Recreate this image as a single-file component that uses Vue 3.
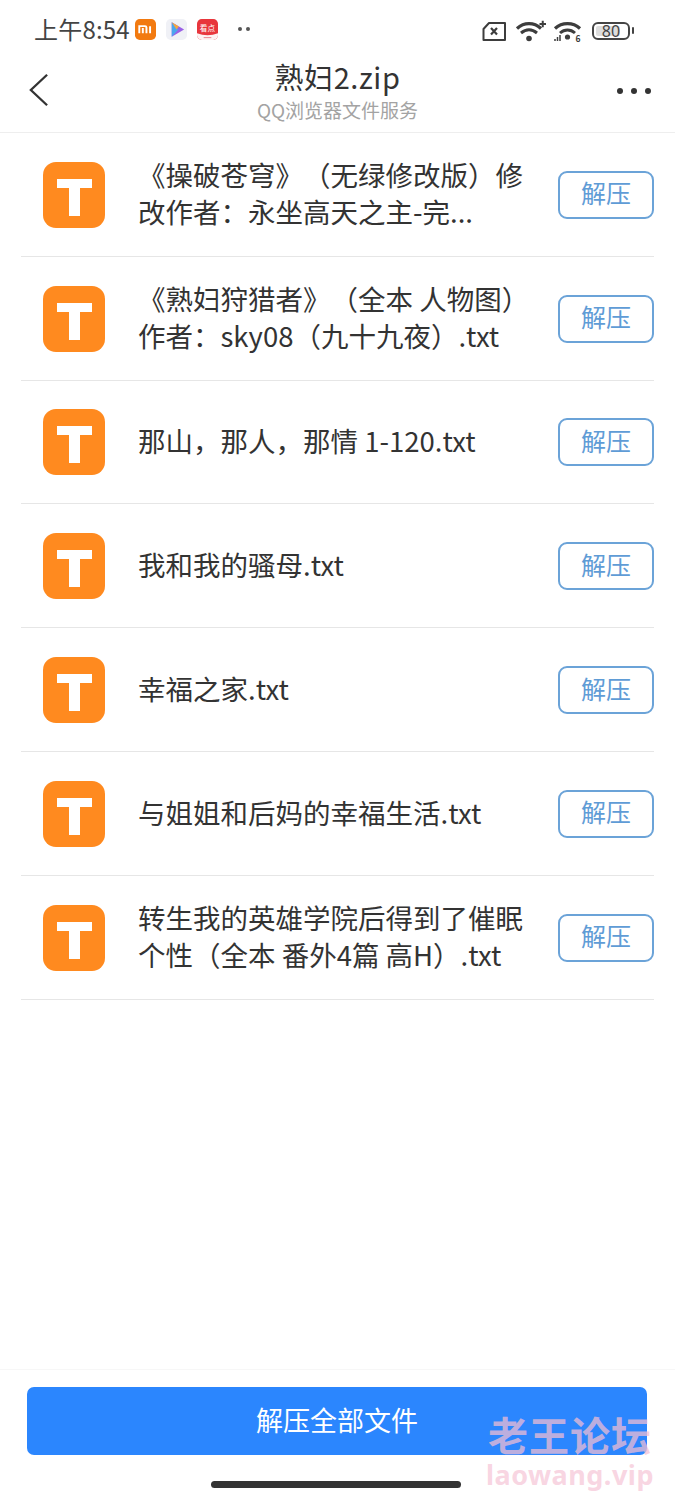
<template>
  <div class="page">
    <div class="status-bar">
      <span class="clock">上午8:54</span>
      <svg class="app-icon" viewBox="0 0 22 22">
        <rect width="22" height="22" rx="5" fill="#f27a10" />
        <path d="M4.500 15V7.500H10.500a1.500 1.500 0 0 1 1.500 1.500V15M8.200 9.500V15M15.800 7.500V15" fill="none" stroke="#fff" stroke-width="2" />
      </svg>
      <svg class="app-icon play" viewBox="0 0 22 22">
        <rect width="22" height="22" rx="5" fill="#f0f1f6" />
        <path d="M6 3.500L19 11L6 18.500Z" fill="#9a5fe6" />
        <path d="M6 3.500L13 11L6 18.500Z" fill="#4aa6ee" />
        <path d="M6 3.500L13.500 7.800L11 11Z" fill="#f4a640" />
      </svg>
      <svg class="app-icon kandian" viewBox="0 0 22 22">
        <rect width="22" height="22" rx="5" fill="#e8363c" />
        <path d="M0 15 Q11 19 22 15 V17 A5 5 0 0 1 17 22 H5 A5 5 0 0 1 0 17Z" fill="#fdf2f2" />
        <path d="M7 19.500h8" stroke="#e8808a" stroke-width="1" />
        <text x="11" y="12.500" text-anchor="middle" font-size="8" fill="#fff">看点</text>
      </svg>
      <span class="dots-small"><i></i><i></i></span>
      <span class="status-right">
        <svg class="sim" viewBox="0 0 24 20">
          <path d="M7 2H23V19H1.500V8Z" fill="none" stroke="#3d3d3d" stroke-width="2" stroke-linejoin="round" />
          <path d="M9 7l6 6.500M15 7l-6 6.500" stroke="#3d3d3d" stroke-width="2.200" />
        </svg>
        <svg class="wifi" viewBox="0 0 30 22">
          <path d="M1 8.500C8 2 18 2 25 8.500" fill="none" stroke="#3d3d3d" stroke-width="3.200" />
          <path d="M5 13C10 8.800 16 8.800 21 13" fill="none" stroke="#3d3d3d" stroke-width="3" />
          <circle cx="13" cy="18.500" r="2.800" fill="#3d3d3d" />
          <path d="M23.500 4h6.500M26.750 0.800v6.500" stroke="#3d3d3d" stroke-width="2" />
        </svg>
        <svg class="wifi second" viewBox="0 0 29 22">
          <path d="M2 8.500C9 2 20 2 27 8.500" fill="none" stroke="#3d3d3d" stroke-width="3.200" />
          <path d="M7 13C11.500 9 17.500 9 22 13" fill="none" stroke="#3d3d3d" stroke-width="3" />
          <circle cx="14.500" cy="17" r="2.600" fill="#3d3d3d" />
          <path d="M2 21v-2M4.500 21v-4M7 21v-6" stroke="#3d3d3d" stroke-width="1.500" />
          <text x="25" y="21.500" text-anchor="middle" font-size="8.500" font-weight="700" fill="#3d3d3d">6</text>
        </svg>
        <span class="battery">
          <span class="battery-body"><span class="battery-level"></span><span class="battery-num">80</span></span>
          <span class="battery-cap"></span>
        </span>
      </span>
    </div>

    <header class="nav">
      <svg class="back" viewBox="0 0 22 36">
        <path d="M20 2L3 18L20 34" fill="none" stroke="#333" stroke-width="2.400" />
      </svg>
      <div class="nav-title">
        <div class="title">熟妇2.zip</div>
        <div class="subtitle">QQ浏览器文件服务</div>
      </div>
      <div class="more"><i></i><i></i><i></i></div>
    </header>

    <ul class="file-list">
      <li v-for="file in files" :key="file" class="file-row">
        <span class="file-icon"><span class="t-bar"></span><span class="t-stem"></span></span>
        <span class="file-name">{{ file }}</span>
        <button class="btn-unzip">解压</button>
      </li>
    </ul>

    <footer class="footer">
      <button class="btn-all">解压全部文件</button>
      <div class="home-bar"></div>
      <div class="watermark">
        <div class="wm-cn">老王论坛</div>
        <div class="wm-en">laowang.vip</div>
      </div>
    </footer>
  </div>
</template>

<script setup>
const files = [
  '《操破苍穹》（无绿修改版）修改作者：永坐高天之主-完...',
  '《熟妇狩猎者》（全本 人物图）作者：sky08（九十九夜）.txt',
  '那山，那人，那情 1-120.txt',
  '我和我的骚母.txt',
  '幸福之家.txt',
  '与姐姐和后妈的幸福生活.txt',
  '转生我的英雄学院后得到了催眠个性（全本 番外4篇 高H）.txt',
]
</script>

<style>
html,
body {
  margin: 0;
  background: #fff;
}
</style>

<style scoped>
.page {
  position: relative;
  width: 675px;
  height: 1500px;
  display: flex;
  flex-direction: column;
  background: #fff;
  overflow: hidden;
  font-family: "Noto Sans CJK SC", "Noto Sans", sans-serif;
  color: #333;
  text-spacing-trim: space-all;
}

.status-bar {
  height: 54px;
  box-sizing: border-box;
  padding: 7px 41px 0 34px;
  display: flex;
  align-items: center;
  flex-shrink: 0;
}

.clock {
  font-size: 24px;
  line-height: 30px;
  color: #444;
  width: 101px;
  white-space: nowrap;
  margin-top: -3px;
  letter-spacing: 0.2px;
}

.app-icon {
  width: 21px;
  height: 21px;
  margin-right: 10px;
  margin-top: -3px;
}

.dots-small {
  display: flex;
  gap: 4px;
  margin-left: 10px;
  margin-top: -3px;
}

.dots-small i {
  width: 4px;
  height: 4px;
  border-radius: 50%;
  background: #555;
}

.status-right {
  margin-left: auto;
  display: flex;
  align-items: center;
}

.sim {
  width: 24px;
  height: 20px;
  margin-right: 10px;
}

.wifi {
  width: 30px;
  height: 22px;
  margin-right: 7px;
}

.wifi.second {
  width: 29px;
  margin-right: 10px;
}

.battery {
  display: flex;
  align-items: center;
  gap: 2px;
}

.battery-body {
  position: relative;
  box-sizing: border-box;
  width: 38px;
  height: 18px;
  border: 2px solid #444;
  border-radius: 6px;
  display: flex;
  align-items: center;
  justify-content: center;
}

.battery-level {
  position: absolute;
  left: 2px;
  top: 2px;
  bottom: 2px;
  width: 24px;
  background: #ddd;
  border-radius: 2px;
}

.battery-num {
  position: relative;
  font-family: "Noto Sans", sans-serif;
  font-size: 16px;
  line-height: 14px;
  color: #444;
}

.battery-cap {
  width: 2px;
  height: 7px;
  background: #444;
  border-radius: 1px;
}

.nav {
  height: 79px;
  flex-shrink: 0;
  box-sizing: border-box;
  border-bottom: 1px solid #eeeeee;
  padding: 0 28px;
  display: grid;
  grid-template-columns: 1fr auto 1fr;
  align-items: center;
}

.back {
  width: 21px;
  height: 36px;
  margin-top: -6px;
}

.nav-title {
  text-align: center;
  margin-top: -3px;
}

.title {
  font-size: 29px;
  line-height: 35px;
  letter-spacing: 0.6px;
  color: #333;
}

.subtitle {
  margin-top: 2px;
  font-size: 19px;
  line-height: 28px;
  color: #a3a3a3;
}

.more {
  display: flex;
  justify-content: flex-end;
  gap: 8px;
  margin: -4px -4px 0 0;
}

.more i {
  width: 6px;
  height: 6px;
  border-radius: 50%;
  background: #333;
}

.file-list {
  list-style: none;
  margin: 0 21px;
  padding: 0;
}

.file-row {
  height: 123.8px;
  box-sizing: border-box;
  border-bottom: 1px solid #e6e6e6;
  display: flex;
  align-items: center;
  padding-left: 22px;
}

.file-icon {
  position: relative;
  width: 62px;
  height: 66px;
  margin-top: 1px;
  flex-shrink: 0;
  border-radius: 13px;
  background: #ff8a1f;
}

.t-bar {
  position: absolute;
  left: 14px;
  top: 17px;
  width: 35px;
  height: 9px;
  background: #fff;
}

.t-stem {
  position: absolute;
  left: 26px;
  top: 20px;
  width: 11px;
  height: 34px;
  background: #fff;
}

.file-name {
  width: 392px;
  margin: 0 0 3px 33px;
  font-size: 27.5px;
  line-height: 36.500px;
  color: #333;
}

.btn-unzip {
  margin: 1px 0 0 auto;
  width: 96px;
  height: 48px;
  box-sizing: border-box;
  padding: 0 0 5px;
  border: 2px solid #6ba3d8;
  border-radius: 9px;
  background: #fff;
  font-family: inherit;
  font-size: 25px;
  color: #5f9cd6;
}

.footer {
  margin-top: auto;
  height: 131px;
  box-sizing: border-box;
  border-top: 1px solid #f7f7f7;
  padding: 17px 27px 0;
  position: relative;
}

.btn-all {
  display: block;
  width: 620px;
  height: 68px;
  padding: 0 0 3px;
  border: none;
  border-radius: 7px;
  background: #2b86fe;
  color: #fff;
  font-family: inherit;
  font-size: 27px;
}

.home-bar {
  width: 250px;
  height: 7px;
  margin: 26px auto 0 184px;
  border-radius: 4px;
  background: #333;
}

.watermark {
  position: absolute;
  right: 21px;
  top: 41px;
  text-align: center;
  font-weight: 700;
  pointer-events: none;
}

.wm-cn {
  font-size: 40px;
  line-height: 46px;
  letter-spacing: 1px;
  color: rgba(245, 190, 210, 0.72);
}

.wm-en {
  font-family: "Noto Sans", sans-serif;
  font-size: 27px;
  line-height: 34px;
  letter-spacing: 0.5px;
  color: rgba(245, 190, 210, 0.65);
  margin-top: 1px;
}
</style>
